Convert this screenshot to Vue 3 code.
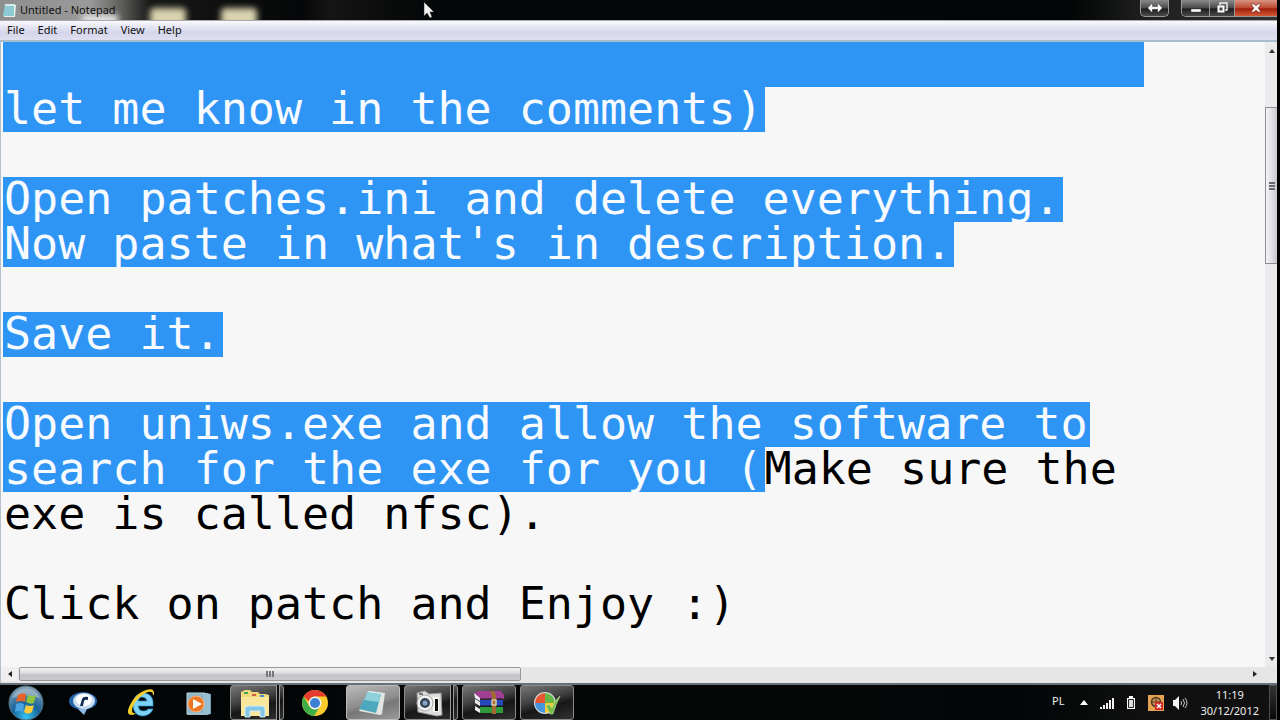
<script setup>
const menus = ['File', 'Edit', 'Format', 'View', 'Help']
const lines = [
  { selected: ' '.repeat(42), rest: '' },
  { selected: 'let me know in the comments)', rest: '' },
  { selected: '', rest: '' },
  { selected: 'Open patches.ini and delete everything.', rest: '' },
  { selected: "Now paste in what's in description.", rest: '' },
  { selected: '', rest: '' },
  { selected: 'Save it.', rest: '' },
  { selected: '', rest: '' },
  { selected: 'Open uniws.exe and allow the software to', rest: '' },
  { selected: 'search for the exe for you (', rest: 'Make sure the' },
  { selected: '', rest: 'exe is called nfsc).' },
  { selected: '', rest: '' },
  { selected: '', rest: 'Click on patch and Enjoy :)' },
]
</script>

<template>
  <div class="desktop">
    <main class="window">
      <header class="titlebar">
        <svg class="app-icon" width="14" height="16" viewBox="0 0 14 16" aria-hidden="true">
          <path d="M3 2h10l-1 12H1z" fill="#8ccbd4" />
          <path d="M3 2h10v2H3z" fill="#d5e9e8" />
          <path d="M12 3h2l-1 12H2v-1h10z" fill="#e9f1ed" />
        </svg>
        <h1>Untitled - Notepad</h1>
        <div class="glimpses" aria-hidden="true"><i></i><i></i><i></i></div>
        <svg class="pointer" width="12" height="18" viewBox="0 0 12 18" aria-hidden="true">
          <path d="M1 1v14l3-3 3 5 2-1-2-5h4z" fill="#f4f4f4" stroke="#222" stroke-width=".5" />
        </svg>
        <div class="controls">
          <button class="resize" aria-label="Resize">
            <svg width="16" height="10" viewBox="0 0 16 10"><path d="M1 5l4-4v3h6V1l4 4-4 4V6H5v3z" fill="#fff" stroke="#ccc" stroke-width=".5" /></svg>
          </button>
          <div class="group">
            <button aria-label="Minimize">
              <svg width="12" height="10" viewBox="0 0 12 10"><path d="M1 6h10v3H1z" fill="#fff" stroke="#444" stroke-width=".5" /></svg>
            </button>
            <button class="restore" aria-label="Restore">
              <svg width="12" height="12" viewBox="0 0 12 12"><path d="M4 3V1h7v7H9" fill="none" stroke="#eee" stroke-width="1.5" /><path d="M2.500 4.500h5v5h-5z" fill="#444" stroke="#fff" stroke-width="2" /></svg>
            </button>
            <button class="close" aria-label="Close">
              <svg width="12" height="10" viewBox="0 0 12 10"><path d="M1 1h3l2 2 2-2h3L8 5l3 4H8L6 7 4 9H1l3-4z" fill="#fff" stroke="#5a2018" stroke-width=".5" /></svg>
            </button>
          </div>
        </div>
      </header>

      <nav class="menubar" aria-label="Menu">
        <button v-for="m in menus" :key="m">{{ m }}</button>
      </nav>

      <div class="body">
        <div class="editor" contenteditable="true" role="textbox" aria-multiline="true" aria-label="Document text" spellcheck="false">
          <div v-for="(l, i) in lines" :key="i" class="line"><mark v-if="l.selected">{{ l.selected }}</mark><span v-if="l.rest">{{ l.rest }}</span></div>
        </div>
        <div class="vscroll">
          <button class="arrow" aria-label="Scroll up"><svg width="6" height="4" viewBox="0 0 6 4"><path d="M0 4l3-4 3 4z" fill="#333" /></svg></button>
          <div class="track">
            <div class="thumb"><i></i><i></i><i></i></div>
          </div>
          <button class="arrow" aria-label="Scroll down"><svg width="6" height="4" viewBox="0 0 6 4"><path d="M0 0l3 4 3-4z" fill="#333" /></svg></button>
        </div>
      </div>

      <div class="hscroll">
        <button class="arrow" aria-label="Scroll left"><svg width="4" height="6" viewBox="0 0 4 6"><path d="M4 0L0 3l4 3z" fill="#222" /></svg></button>
        <div class="track">
          <div class="thumb"><i></i><i></i><i></i></div>
        </div>
        <button class="arrow" aria-label="Scroll right"><svg width="4" height="6" viewBox="0 0 4 6"><path d="M0 0l4 3-4 3z" fill="#222" /></svg></button>
      </div>
    </main>

    <footer class="taskbar">
      <button class="start" aria-label="Start">
        <svg width="36" height="36" viewBox="0 0 36 36">
          <defs>
            <radialGradient id="orb" cx=".5" cy=".9" r=".9"><stop offset="0" stop-color="#35c4f4" /><stop offset=".45" stop-color="#17639c" /><stop offset="1" stop-color="#8aa3b3" /></radialGradient>
          </defs>
          <circle cx="18" cy="18" r="17" fill="url(#orb)" stroke="#53707f" />
          <path d="M4 13a15 15 0 0 1 28 0q-14-5-28 0z" fill="#c3d2d9" opacity=".5" />
          <path d="M10 10q4-3 8-1l-1 8q-4-2-9 0z" fill="#e8632a" />
          <path d="M20 10q4 2 8 0l-2 8q-4 2-8-1z" fill="#8fc43f" />
          <path d="M8 19q4-2 8 0l-1 8q-4-2-8 0z" fill="#4aa3e4" />
          <path d="M18 20q4 2 8 0l-2 7q-4 3-8 0z" fill="#fbcb3b" />
        </svg>
      </button>
      <button class="pin" aria-label="Messenger">
        <svg width="32" height="28" viewBox="0 0 32 28">
          <ellipse cx="16" cy="12" rx="14" ry="9" fill="#2563a8" />
          <path d="M11 20l6 6 4-8z" fill="#8fb9e4" />
          <ellipse cx="17" cy="12" rx="11" ry="8" fill="#c9dcf0" />
          <ellipse cx="17" cy="11" rx="8" ry="6" fill="#fff" />
          <path d="M13 17l2-7q1-3 6-2v3q-3-1-4 1l-1 5z" fill="#142c55" />
        </svg>
      </button>
      <button class="pin" aria-label="Internet Explorer">
        <svg width="32" height="32" viewBox="0 0 32 32">
          <path d="M28 19H13q1 5 5 5 4 0 5-2h5q-3 7-11 7-9-1-9-12 1-11 11-11 10 1 9 13zM13 14h9q-1-4-5-4-3 0-4 4z" fill="#7ed2f5" stroke="#2995d4" stroke-width=".7" />
          <path d="M29 8q1-8-8-5Q11 6 5 18 0 28 7 28q2 0 4-2-4 1-4-3 1-7 8-13 7-6 11-5 2 0 2 3z" fill="#f5cd27" />
        </svg>
      </button>
      <button class="pin" aria-label="Media Player">
        <svg width="28" height="28" viewBox="0 0 28 28">
          <path d="M2 4h20l4 1v20l-4 1H2z" fill="#6d9fba" />
          <path d="M2 4h18v21H2z" fill="#8fb5c8" stroke="#b8d2de" />
          <path d="M22 4v22M24 5v20" stroke="#c5dde8" />
          <circle cx="11" cy="15" r="8" fill="#ee7623" stroke="#f7b37e" />
          <path d="M8 10l9 5-9 5z" fill="#fff" />
        </svg>
      </button>
      <button class="running stacked" aria-label="Explorer">
        <svg width="32" height="30" viewBox="0 0 32 30">
          <path d="M2 4l4-2h5l2 2h6l2 2h5l4 1v20H2z" fill="#f0d87c" />
          <path d="M2 9h28v19H2z" fill="#f9e79c" />
          <path d="M5 4h4v2H5z" fill="#39a957" /><path d="M13 6h4v2h-4z" fill="#d05b42" /><path d="M21 7h4v2h-4z" fill="#498bd0" />
          <path d="M6 29v-8q0-3 3-3h14q3 0 3 3v8h-5v-6H11v6z" fill="#82c8e6" stroke="#d4edf6" />
        </svg>
      </button>
      <button class="pin" aria-label="Chrome">
        <svg width="28" height="28" viewBox="0 0 28 28">
          <circle cx="14" cy="14" r="13" fill="#fccb2e" />
          <path d="M2.700 7.500A13 13 0 0 1 25.300 7.500H14a6.500 6.500 0 0 0-6 5z" fill="#e33b2e" />
          <path d="M2.700 7.500A13 13 0 0 0 13 27l6-9.500a6.500 6.500 0 0 1-10.600 0z" fill="#3fae49" />
          <circle cx="14" cy="14" r="6.500" fill="#f3f3f0" /><circle cx="14" cy="14" r="5" fill="#3d7fd2" />
        </svg>
      </button>
      <button class="running active" aria-label="Notepad">
        <svg width="32" height="28" viewBox="0 0 32 28">
          <path d="M11 2l17 2-3 21-2 1L2 22z" fill="#e2e7e2" />
          <path d="M11 3l13 2-5 19L2 20z" fill="#4fa7bd" />
          <path d="M11 3l13 2-2 8-15-2z" fill="#8fd0db" />
          <path d="M11 2l15 2v1l-15-2z" fill="#d9eef0" />
        </svg>
      </button>
      <button class="running stacked" aria-label="Camera">
        <svg width="30" height="28" viewBox="0 0 30 28">
          <path d="M3 4l8-2 4 3 12-1 1 22-5 1-19-4z" fill="#dedfda" stroke="#999" />
          <path d="M19 8h6v15h-6z" fill="#f5f5f2" /><path d="M21 10h3v12h-3z" fill="#111" />
          <circle cx="11" cy="14" r="8" fill="#f1f2ef" stroke="#aaa" />
          <circle cx="11" cy="14" r="5" fill="#344456" /><circle cx="11" cy="14" r="2.500" fill="#88a6c4" /><path d="M5 4h4v2H5z" fill="#777" />
        </svg>
      </button>
      <button class="running" aria-label="WinRAR">
        <svg width="32" height="28" viewBox="0 0 32 28">
          <path d="M1 4l5-2h22l3 4v4H7z" fill="#a13f93" /><path d="M1 4l6 5v3L2 9z" fill="#eee" />
          <path d="M7 11h23v6H7z" fill="#2748bd" /><path d="M2 10l5 3v4l-5-3z" fill="#f0f0f0" />
          <path d="M7 18h23v6H7z" fill="#2e9a3c" /><path d="M2 17l5 3v4l-5-3z" fill="#f0f0f0" />
          <path d="M7 10h23M7 17h23" stroke="#161623" />
          <path d="M17 2h4l2 4v19h-4V7z" fill="#a46a35" /><path d="M19 11h4v5h-4z" fill="none" stroke="#d7c8a2" stroke-width="1.500" />
        </svg>
      </button>
      <button class="running" aria-label="System tool">
        <svg width="30" height="28" viewBox="0 0 30 28">
          <circle cx="13" cy="14" r="11" fill="#ddd" />
          <path d="M13 14V4A10 10 0 0 0 3 14z" fill="#e85632" /><path d="M13 14h10A10 10 0 0 0 13 4z" fill="#67b846" />
          <path d="M13 14H3a10 10 0 0 0 10 10z" fill="#4296dc" /><path d="M13 14v10a10 10 0 0 0 10-10z" fill="#f5c92e" />
          <path d="M14 17l3-2 3 4q2-7 8-12-4 8-7 18h-3z" fill="#71bd45" stroke="#e3f0c7" stroke-width=".5" />
        </svg>
      </button>

      <div class="tray">
        <span class="lang">PL</span>
        <button aria-label="Show hidden icons"><svg width="8" height="5" viewBox="0 0 8 5"><path d="M0 5l4-5 4 5z" fill="#fff" /></svg></button>
        <button aria-label="Network"><svg width="14" height="14" viewBox="0 0 14 14"><path d="M0 11h2v2H0zM3 9h2v4H3zM6 7h2v6H6zM9 4h2v9H9zM12 2h2v11h-2z" fill="#f2f2f2" /></svg></button>
        <button aria-label="Battery"><svg width="10" height="14" viewBox="0 0 10 14"><path d="M3 0h4v2h2v11H1V2h2z" fill="#fff" /><path d="M2.500 3.500h5v8h-5z" fill="#ddd" stroke="#222" /></svg></button>
        <button aria-label="Alert"><svg width="16" height="16" viewBox="0 0 16 16"><path d="M0 0h16v16H0z" fill="#e4a253" /><circle cx="8" cy="7" r="4.500" fill="#c99152" stroke="#4c3922" stroke-width="1.500" /><path d="M8 2v10M3 7h10" stroke="#5b4020" /><path d="M7 7h8v8H7z" fill="#cf2929" /><path d="M9 9l4 4m0-4l-4 4" stroke="#fff" stroke-width="1.500" /></svg></button>
        <button aria-label="Volume"><svg width="16" height="14" viewBox="0 0 16 14"><path d="M1 4h2l4-4v14l-4-4H1z" fill="#f5f5f5" /><path d="M9 5q1 2 0 4M11 3q3 4 0 8M13 2q4 5 0 10" fill="none" stroke="#c9c9c9" /></svg></button>
        <button class="clock"><time>11:19</time><span>30/12/2012</span></button>
        <button class="peek" aria-label="Show desktop"></button>
      </div>
    </footer>
  </div>
</template>

<style>
body { margin: 0; background: #000; }
</style>

<style scoped>
* { box-sizing: border-box; }
.desktop {
  min-height: 100vh; display: flex; flex-direction: column; padding-right: 3px;
  background: #000; font-family: "Noto Sans", "Open Sans", sans-serif; overflow: hidden;
}
button { padding: 0; border: 0; background: none; color: inherit; font: inherit; display: flex; align-items: center; justify-content: center; }
svg { display: block; flex: none; }
.window { flex: 1; display: flex; flex-direction: column; background: #f7f7f7; }

.titlebar {
  position: relative; height: 20px; display: flex; align-items: center; padding-left: 2px; overflow: hidden;
  background: linear-gradient(90deg, #8e8e8e 0, #9a9a9a 90px, #5c5c5a 122px, #171817 150px, #050607 300px, #151515 330px, #0a0b0b 390px, #030708 440px, #030606 84%, #1c1c1c 89%, #333 100%);
}
.titlebar h1 { position: relative; z-index: 1; margin: 0 0 0 4px; font-size: 11px; line-height: 18px; font-weight: 400; color: #101010; white-space: nowrap; }
.glimpses i { position: absolute; top: 8px; width: 36px; height: 18px; border-radius: 4px; background: #d9d2ae; filter: blur(3px); }
.glimpses i:nth-child(1) { left: 82px; top: 14px; background: #dedede; }
.glimpses i:nth-child(2) { left: 150px; }
.glimpses i:nth-child(3) { left: 221px; }
.pointer { position: absolute; left: 423px; top: 1px; }
.controls { margin-left: auto; align-self: flex-start; display: flex; gap: 12px; }
.controls button { width: 27px; height: 16px; background: linear-gradient(#8a8a8a, #4a4a4a 50%, #1c1c1c 55%, #4a4a4a); }
.controls .resize { width: 29px; height: 17px; border: 1px solid #999; border-top: 0; border-radius: 0 0 5px 5px; }
.group { display: flex; border: 1px solid #999; border-width: 0 0 1px 1px; border-radius: 0 0 0 5px; overflow: hidden; }
.controls .restore { width: 26px; border: solid #999; border-width: 0 1px; }
.controls .close { width: 42px; background: linear-gradient(#d79382, #bd4a33 48%, #9f1f0b 55%, #d25a36); }

.menubar {
  height: 20px; display: flex; align-items: center; gap: 13px; padding: 0 0 2px 7px;
  border-top: 1px solid #aaa; background: linear-gradient(#fafafd, #e3e3f2 35%, #d5d6ea 60%, #dfdff0);
  font-size: 11px; line-height: 16px; color: #111;
}
.body { flex: 1; display: flex; border-top: 2px solid #a9bccc; }
.editor {
  flex: 1; min-width: 0; padding-left: 2px; border-left: 1px solid #b4bfca; outline: 0; overflow: hidden;
  font-family: "DejaVu Sans Mono", monospace; font-size: 45px; color: #000; background: #f7f7f7;
}
.line { height: 45px; display: flex; white-space: pre; line-height: 43px; }
mark { height: 45px; padding-left: 1px; padding-right: 2px; background: #2f95f5; color: #f7fbff; }
.line span:first-child { padding-left: 1px; }

.vscroll { width: 12px; display: flex; flex-direction: column; background: #ebebee; }
.vscroll .arrow { height: 17px; justify-content: flex-end; padding-right: 2px; }
.vscroll .track { flex: 1; padding-top: 48px; }
.vscroll .thumb {
  height: 29%; display: flex; flex-direction: column; justify-content: center; align-items: flex-end; gap: 1px; padding-right: 2px;
  border: 1px solid #8d8d92; border-right: 0; background: linear-gradient(90deg, #f4f4f6, #e2e2e7 45%, #c8c8d0);
}
.vscroll i { width: 6px; height: 2px; background: #68686c; }
.hscroll { height: 16px; display: flex; background: #e6e6e6; border-left: 1px solid #b4bfca; }
.hscroll .arrow { width: 17px; height: 14px; background: #efeff1; }
.hscroll .arrow:last-child { width: 21px; margin-right: 12px; background: none; }
.hscroll .track { flex: 1; padding-left: 1px; }
.hscroll .thumb {
  width: 41%; height: 14px; display: flex; justify-content: center; align-items: center; gap: 1px;
  border: 1px solid #98989c; border-radius: 2px; background: linear-gradient(#f3f3f3, #dcdcdc 45%, #c3c3c8 55%, #c9c9ce);
}
.hscroll i { width: 2px; height: 6px; background: #77777b; }

.taskbar {
  height: 37px; display: flex; align-items: center; gap: 4px; border-top: 2px solid #66707a;
  background: linear-gradient(90deg, #020506, #050707 60%, #020606 80%, #101010 90%); color: #eee;
}
.start { width: 52px; height: 35px; }
.pin { width: 54px; height: 35px; }
.running {
  position: relative; width: 54px; height: 35px; border: 1px solid #8b8b8b; border-radius: 3px;
  background: linear-gradient(165deg, #777 0, #414141 40%, #171717 60%, #303030);
}
.active { border-color: #bbb; background: linear-gradient(165deg, #bbb, #8c8c8c 50%, #777 60%, #999); }
.stacked { padding-right: 4px; }
.stacked::after { content: ""; position: absolute; inset: -1px 3px -1px auto; width: 2px; border: solid #999; border-width: 0 1px; background: #111; }
.tray { margin-left: auto; align-self: stretch; display: flex; align-items: center; font-size: 11px; }
.lang { margin-right: 16px; padding-bottom: 4px; }
.tray button { margin-right: 12px; }
.tray button:nth-of-type(4) { margin-right: 8px; }
.tray button:nth-of-type(5) { margin-right: 12px; }
.tray .clock { flex-direction: column; line-height: 16px; margin-right: 10px; }
.tray .peek { width: 8px; height: 35px; margin: 0; border: 1px solid #4e4e4e; background: linear-gradient(#333, #090909); }
</style>
